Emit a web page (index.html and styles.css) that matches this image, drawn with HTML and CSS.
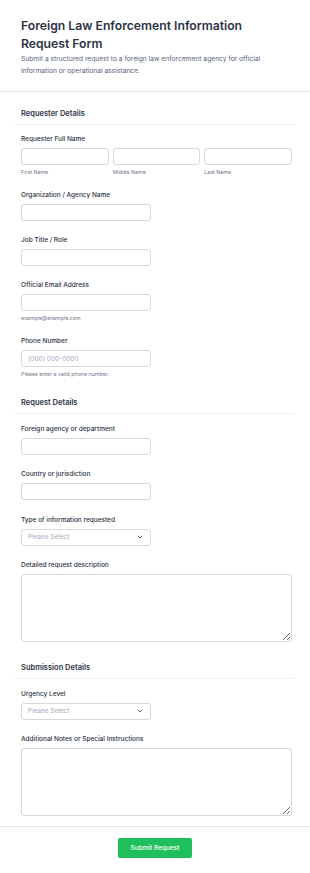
FILE: index.html
```html
<!DOCTYPE html>
<html lang="en">
<head>
    <meta charset="UTF-8">
    <meta name="viewport" content="width=device-width, initial-scale=1.0">
    <title>Foreign Law Enforcement Information Request Form</title>
    <link rel="stylesheet" href="styles.css">
</head>

<body>
    <header class="form-header">
        <h1>Foreign Law Enforcement Information Request Form</h1>
        <p class="form-desc">Submit a structured request to a foreign law enforcement agency for official information or operational assistance.</p>
    </header>

    <form class="form-body">
        <section class="form-section">
            <h2 class="section-title">Requester Details</h2>

            <div class="field">
                <label class="form-label">Requester Full Name</label>
                <div class="name-row">
                    <div class="name-col">
                        <input type="text" class="form-control">
                        <span class="sub-label">First Name</span>
                    </div>
                    <div class="name-col">
                        <input type="text" class="form-control">
                        <span class="sub-label">Middle Name</span>
                    </div>
                    <div class="name-col">
                        <input type="text" class="form-control">
                        <span class="sub-label">Last Name</span>
                    </div>
                </div>
            </div>

            <div class="field">
                <label class="form-label">Organization / Agency Name</label>
                <input type="text" class="form-control short">
            </div>

            <div class="field">
                <label class="form-label">Job Title / Role</label>
                <input type="text" class="form-control short">
            </div>

            <div class="field">
                <label class="form-label">Official Email Address</label>
                <input type="email" class="form-control short">
                <span class="sub-label">example@example.com</span>
            </div>

            <div class="field">
                <label class="form-label">Phone Number</label>
                <input type="tel" class="form-control short" placeholder="(000) 000-0000">
                <span class="sub-label">Please enter a valid phone number.</span>
            </div>
        </section>

        <section class="form-section">
            <h2 class="section-title">Request Details</h2>

            <div class="field">
                <label class="form-label">Foreign agency or department</label>
                <input type="text" class="form-control short">
            </div>

            <div class="field">
                <label class="form-label">Country or jurisdiction</label>
                <input type="text" class="form-control short">
            </div>

            <div class="field">
                <label class="form-label">Type of information requested</label>
                <div class="select-box short">
                    <span>Please Select</span>
                    <svg class="chevron" width="6" height="4" viewBox="0 0 6 4"><path d="M1 1l2 2 2-2" fill="none" stroke="#5c6478" stroke-width="1" stroke-linecap="round" stroke-linejoin="round"/></svg>
                </div>
            </div>

            <div class="field field-area">
                <label class="form-label">Detailed request description</label>
                <textarea class="form-control text-area"></textarea>
            </div>
        </section>

        <section class="form-section">
            <h2 class="section-title">Submission Details</h2>

            <div class="field">
                <label class="form-label">Urgency Level</label>
                <div class="select-box short">
                    <span>Please Select</span>
                    <svg class="chevron" width="6" height="4" viewBox="0 0 6 4"><path d="M1 1l2 2 2-2" fill="none" stroke="#5c6478" stroke-width="1" stroke-linecap="round" stroke-linejoin="round"/></svg>
                </div>
            </div>

            <div class="field field-area">
                <label class="form-label">Additional Notes or Special Instructions</label>
                <textarea class="form-control text-area"></textarea>
            </div>
        </section>

        <div class="form-footer">
            <button type="submit" class="btn-submit">Submit Request</button>
        </div>
    </form>
</body>
</html>
```

FILE: styles.css
```css
body {
    background-color: #fff;
    color: #2c3345;
    font-family: 'Inter', 'Liberation Sans', sans-serif;
    margin: 0;
    padding: 0;
    -webkit-font-smoothing: antialiased;
}

.form-header {
    padding: 17px 21px 14px;
    border-bottom: 1px solid #e4e6eb;
}

h1 {
    font-size: 12.2px;
    font-weight: 600;
    line-height: 18px;
    margin: 0;
    color: #2c3345;
}

.form-desc {
    font-size: 6.7px;
    line-height: 12px;
    margin: 0;
    color: #57647e;
}

.form-section {
    margin: 0 15px;
    padding-top: 16px;
}

.form-section + .form-section {
    padding-top: 14px;
}

.section-title {
    font-size: 7.5px;
    font-weight: 600;
    line-height: 11px;
    margin: 0;
    padding: 0 6px 5px;
    border-bottom: 1px solid #eceef2;
}

.field {
    padding: 9px 3px 5px 6px;
    display: flex;
    flex-direction: column;
    align-items: flex-start;
}

.form-section + .form-section .field {
    padding-top: 9.5px;
}

.field-area {
    padding-bottom: 6px;
}

.form-label {
    display: block;
    font-size: 6.5px;
    font-weight: 500;
    line-height: 10px;
    margin-bottom: 4px;
    color: #2c3345;
}

.form-control {
    box-sizing: border-box;
    width: 100%;
    height: 17px;
    border: 1px solid #d5d8e0;
    border-radius: 3px;
    background-color: #fff;
    padding: 0 6px;
    font-family: inherit;
    font-size: 6.5px;
    color: #2c3345;
    margin: 0;
}

.form-control::placeholder {
    color: #a4aabb;
}

.short {
    width: 130px;
}

.name-row {
    display: flex;
    gap: 4px;
    width: 100%;
}

.name-col {
    flex: 1;
    display: flex;
    flex-direction: column;
}

.sub-label {
    font-size: 5.3px;
    line-height: 8px;
    margin-top: 3px;
    color: #6f7689;
}

.select-box {
    box-sizing: border-box;
    height: 17px;
    border: 1px solid #d5d8e0;
    border-radius: 3px;
    padding: 0 6px;
    display: flex;
    align-items: center;
    justify-content: space-between;
    font-size: 6.5px;
    color: #a4aabb;
}

.chevron {
    margin-right: 1px;
}

.text-area {
    height: 68px;
    resize: vertical;
    padding: 4px 6px;
}

.form-footer {
    margin-top: 4px;
    border-top: 1px solid #e4e6eb;
    padding: 11px 0 16px;
    display: flex;
    justify-content: center;
}

.btn-submit {
    background-color: #20bf5d;
    color: #fff;
    border: none;
    border-radius: 2px;
    width: 74px;
    height: 20px;
    font-family: inherit;
    font-size: 6.5px;
    font-weight: 500;
    cursor: pointer;
}
```
